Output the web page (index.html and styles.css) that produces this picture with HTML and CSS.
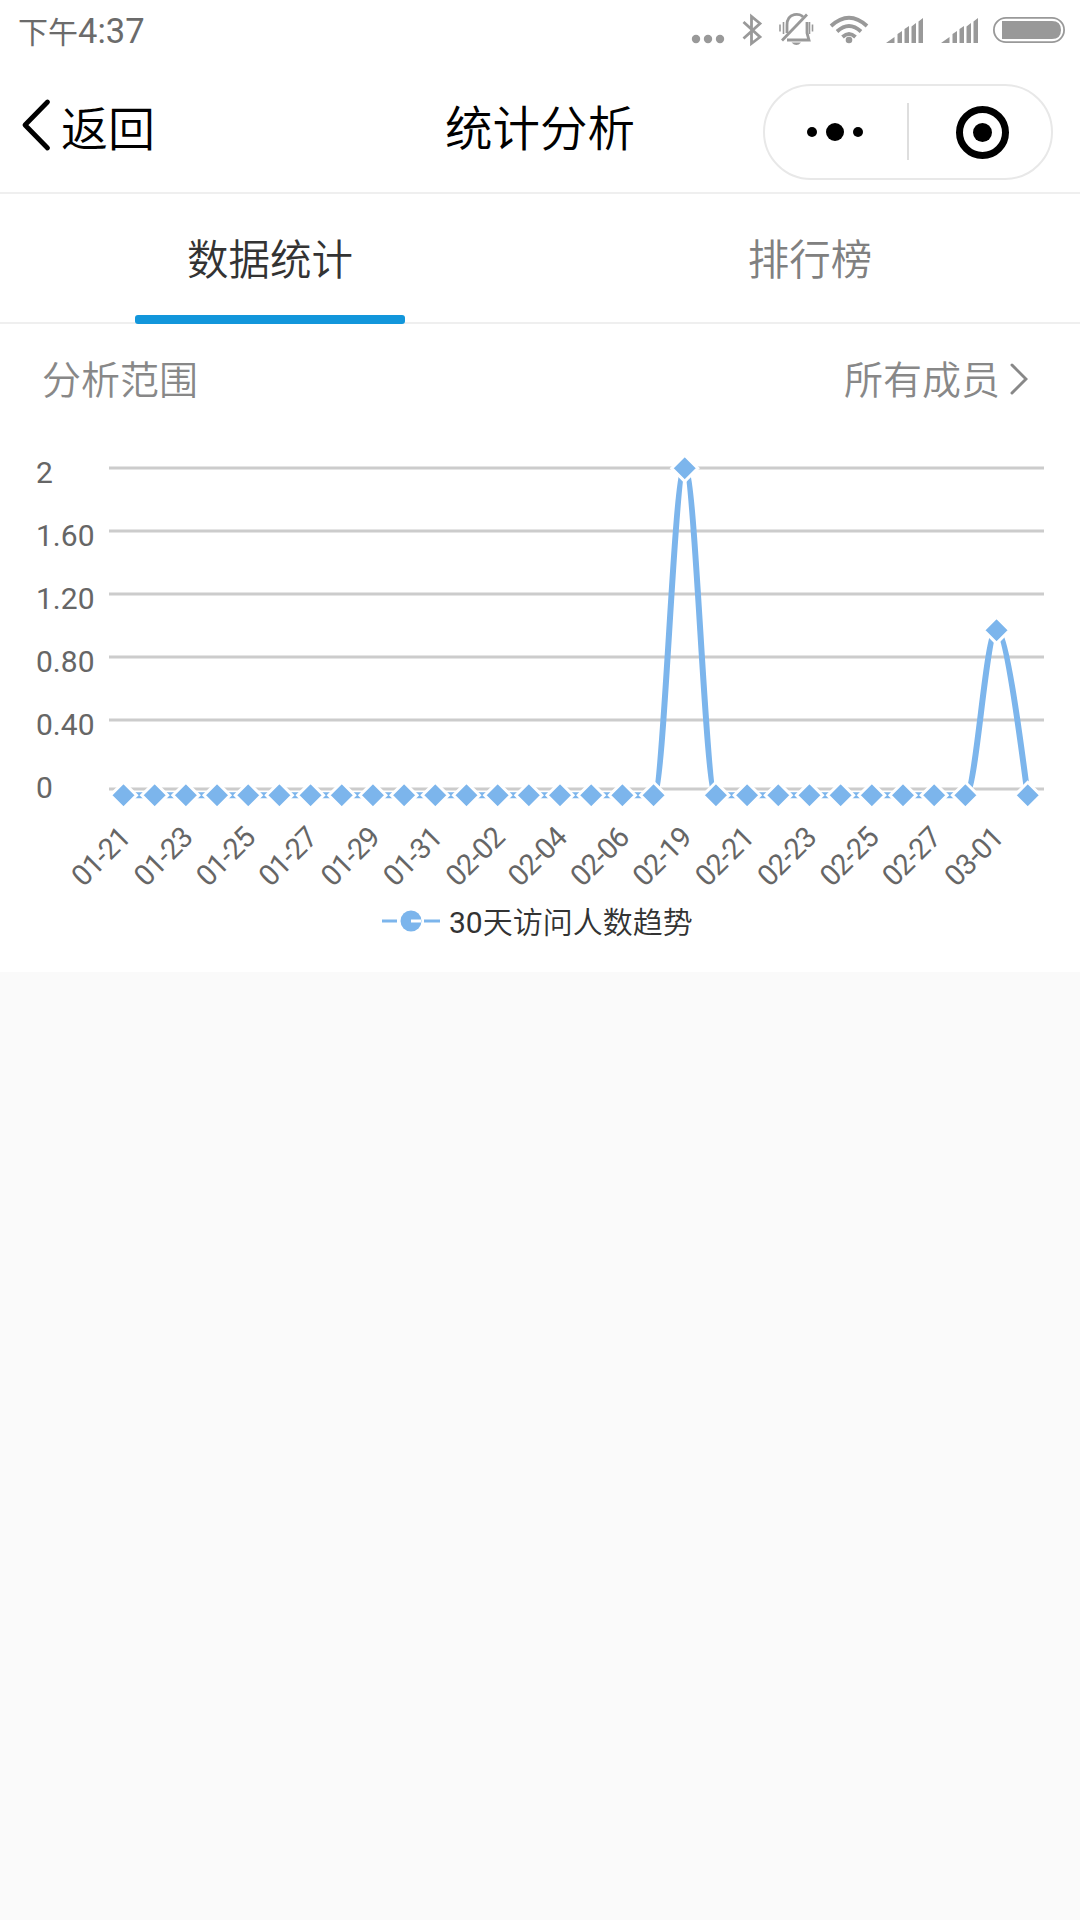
FILE: index.html
```html
<!DOCTYPE html>
<html lang="zh-CN">
  <head>
    <meta charset="UTF-8" />
    <title>统计分析</title>
    <meta name="viewport" content="width=device-width, initial-scale=1.0" />
    <link rel="stylesheet" href="styles.css">
  </head>
  <body>
    <div class="status-bar">
      <span class="time">下午<b>4:37</b></span>
      <svg class="status-icons" width="400" height="60" viewBox="0 0 400 60">
        <!-- notifications -->
        <circle cx="16" cy="39" r="4.2" />
        <circle cx="28" cy="39" r="4.2" />
        <circle cx="40" cy="39" r="4.2" />
        <!-- bluetooth -->
        <path class="line" d="M63.5 22L80 37L71.5 43.500V16.500L80 23.500L63.500 38.500" />
        <!-- muted bell -->
        <path class="line" d="M107 33V25C107 12 121 13 123 17M127 22V33L129 40H107" />
        <path class="line" d="M102 40.500L127 14.500" />
        <path class="thin" d="M100 24.500V31.500M103.500 22V34M129.500 22V34M132.500 24.500V31.500" />
        <path d="M111.500 42.500H121Q116.500 47.500 111.500 42.500Z" />
        <!-- wifi -->
        <circle cx="169" cy="40" r="3.300" />
        <path class="wave" d="M151 26Q169 9.500 187 26M157 31.500Q169 20.500 181 31.500M162.500 37Q169 31 175.500 37" />
        <!-- signals -->
        <path id="signal" d="M206 43L214.500 37V43ZM217.500 34L222 31V43H217.500ZM224.500 29L229 26V43H224.500ZM231.500 26.500L236 23V43H231.500ZM238.500 21.500L243 18V43H238.500Z" />
        <use href="#signal" x="55" />
        <!-- battery -->
        <rect class="battery" x="313.900" y="17.900" width="70.200" height="24.200" rx="12.100" />
        <path d="M322 21H372Q381 21 381 30Q381 39 372 39H322Z" />
      </svg>
    </div>

    <header>
      <a class="back" href="#">
        <svg width="30" height="54" viewBox="0 0 30 54">
          <path d="M26.500 4L4 27L26.500 50" />
        </svg>
        <span>返回</span>
      </a>
      <h1>统计分析</h1>
      <div class="capsule">
        <svg width="290" height="96" viewBox="0 0 290 96">
          <circle cx="49" cy="48" r="5" />
          <circle cx="72" cy="48" r="9" />
          <circle cx="95" cy="48" r="5" />
          <rect class="divider" x="144" y="19" width="2" height="57" />
          <circle class="ring" cx="219.500" cy="48.500" r="23" />
          <circle cx="219.500" cy="48.500" r="9.500" />
        </svg>
      </div>
    </header>

    <nav>
      <a class="active" href="#">数据统计</a>
      <a href="#">排行榜</a>
    </nav>

    <main>
      <div class="range">
        <span>分析范围</span>
        <a href="#">所有成员
          <svg width="18" height="32" viewBox="0 0 18 32">
            <path d="M2 2L16 16L2 30" />
          </svg>
        </a>
      </div>

      <svg class="chart" id="chart" width="1080" height="552" viewBox="0 420 1080 552">
        <g id="grid"></g>
        <path id="trend" />
        <g id="points"></g>
        <g id="dates"></g>
        <g class="legend">
          <path d="M382 921H397M424 921H440" />
          <circle cx="411" cy="921" r="10.500" />
          <path class="mark" d="M411 921H421" />
          <text x="449" y="933">30<tspan>天访问人数趋势</tspan></text>
        </g>
      </svg>
    </main>

    <script>
      const labels = ["2", "1.60", "1.20", "0.80", "0.40", "0"];
      const dates = ["01-21", "01-23", "01-25", "01-27", "01-29", "01-31", "02-02", "02-04",
        "02-06", "02-19", "02-21", "02-23", "02-25", "02-27", "03-01"];
      const left = 123.5;
      const step = 31.18;
      const bottom = 795.3;
      const values = new Array(30).fill(0);
      values[18] = 2;
      values[28] = 1;

      // y axis labels and grid lines
      document.getElementById("grid").innerHTML = labels
        .map((text, i) => {
          const y = i === 5 ? 789 : 468 + i * 63;
          return `<path d="M109 ${y}H1044" /><text x="36" y="${483 + i * 63}">${text}</text>`;
        })
        .join("");

      const px = (i) => left + i * step;
      const py = (v) => (v === 2 ? 468.3 : v === 1 ? 630.3 : bottom);

      // smooth curve, flat at every zero
      let d = `M${px(0)} ${bottom}`;
      for (let i = 1; i < values.length; i++) {
        const a = py(values[i - 1]);
        const b = py(values[i]);
        if (a === b) {
          d += `L${px(i)} ${b}`;
        } else if (i === values.length - 1) {
          d += `C${px(i - 1) + 11} ${a} ${px(i) - 3} ${b - 20} ${px(i)} ${b}`;
        } else {
          d += `C${px(i - 1) + 11} ${a} ${px(i) - 11} ${b} ${px(i)} ${b}`;
        }
      }
      document.getElementById("trend").setAttribute("d", d);

      document.getElementById("points").innerHTML = values
        .map((v, i) => `<path d="M${px(i)} ${py(v) - 13}l13 13l-13 13l-13 -13z" />`)
        .join("");

      document.getElementById("dates").innerHTML = dates
        .map((text, i) => `<text transform="translate(${131.8 + i * step * 2} 839.5) rotate(-45)">${text}</text>`)
        .join("");
    </script>
  </body>
</html>
```
FILE: styles.css
```css
body {
  margin: 0;
  background: #fafafa;
  color: #333;
  font-family: "Noto Sans CJK SC", sans-serif;
  font-weight: 350;
}

a {
  color: inherit;
  text-decoration: none;
}

.status-bar {
  display: flex;
  justify-content: space-between;
  height: 60px;
  background: #fff;
}

.time {
  padding-left: 18px;
  color: #6b6b6b;
  font-size: 30px;
  font-weight: 400;
  line-height: 60px;
}

.time b {
  font-family: Roboto, sans-serif;
  font-size: 34.5px;
  font-weight: 400;
}

.status-icons {
  fill: #999;
}

.status-icons .line,
.status-icons .thin,
.status-icons .wave,
.battery {
  fill: none;
  stroke: #999;
  stroke-width: 2.8;
}

.status-icons .thin {
  stroke-width: 1.6;
}

.status-icons .wave {
  stroke-width: 3.8;
}

.status-icons .battery {
  stroke-width: 1.8;
}

header {
  display: grid;
  grid-template-columns: 1fr auto 1fr;
  align-items: center;
  box-sizing: border-box;
  height: 134px;
  padding: 0 27px;
  border-bottom: 2px solid #efefef;
  background: #fff;
  color: #000;
}

.back {
  display: flex;
  align-items: center;
  gap: 10px;
  margin-left: -6px;
  padding-bottom: 2px;
  font-size: 47px;
}

.back path {
  fill: none;
  stroke: #000;
  stroke-width: 4.8;
  stroke-linecap: round;
  stroke-linejoin: round;
}

h1 {
  margin: 0;
  padding-bottom: 2px;
  font-size: 47.5px;
  font-weight: 350;
}

.capsule {
  justify-self: end;
  box-sizing: border-box;
  width: 290px;
  height: 96px;
  margin-top: 12px;
  border: 2px solid #e8e8e8;
  border-radius: 48px;
}

.capsule svg {
  display: block;
  margin: -2px;
}

.divider {
  fill: #dedede;
}

.ring {
  fill: none;
  stroke: #000;
  stroke-width: 7;
}

nav {
  display: flex;
  justify-content: space-around;
  box-sizing: border-box;
  height: 130px;
  border-bottom: 2px solid #efefef;
  background: #fff;
}

nav a {
  position: relative;
  width: 270px;
  color: #808080;
  font-size: 41.5px;
  line-height: 126px;
  text-align: center;
}

nav .active {
  color: #333;
}

nav .active::after {
  content: "";
  position: absolute;
  bottom: -2px;
  left: 0;
  width: 100%;
  height: 9px;
  border-radius: 3px;
  background: #1296db;
}

main {
  height: 648px;
  background: #fff;
}

.range {
  display: flex;
  align-items: center;
  justify-content: space-between;
  height: 96px;
  padding: 9px 52px 0 42px;
  box-sizing: border-box;
  color: #888;
  font-size: 39px;
}

.range a {
  display: flex;
  align-items: center;
  gap: 10px;
}

.range svg {
  margin-top: 4px;
}

.range path {
  fill: none;
  stroke: #888;
  stroke-width: 3;
  stroke-linecap: round;
}

.chart {
  display: block;
  font-family: Roboto, "Noto Sans CJK SC", sans-serif;
  font-size: 30px;
  font-weight: 400;
  fill: #666;
}

#grid path {
  stroke: #ccc;
  stroke-width: 3;
}

#trend {
  fill: none;
  stroke: #7cb5ec;
  stroke-width: 6;
}

#points path {
  fill: #7cb5ec;
  stroke: #fff;
  stroke-width: 3;
}

#dates text {
  font-size: 29px;
  letter-spacing: -1px;
  text-anchor: end;
}

.legend path {
  stroke: #7cb5ec;
  stroke-width: 3;
}

.legend circle {
  fill: #7cb5ec;
}

.legend .mark {
  stroke: #fff;
}

.legend text {
  fill: #333;
}

.legend tspan {
  font-weight: 350;
}
```
